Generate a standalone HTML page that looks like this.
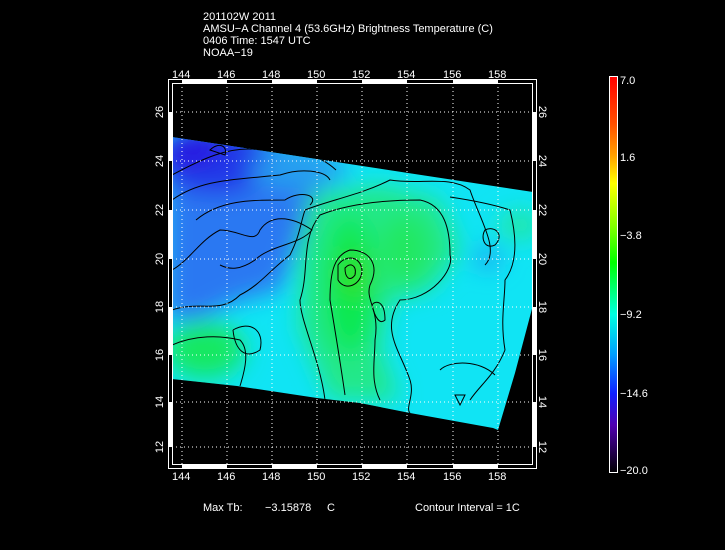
<!DOCTYPE html>
<html><head><meta charset="utf-8"><style>
html,body{margin:0;padding:0;background:#000;}
body{width:725px;height:550px;overflow:hidden;position:relative;font-family:"Liberation Sans",sans-serif;color:#fff;}
.t{position:absolute;font-size:11px;line-height:12px;white-space:nowrap;color:#fff;}
</style></head><body>
<div class="t" style="left:203px;top:11px;">201102W 2011<br>AMSU−A Channel 4 (53.6GHz) Brightness Temperature (C)<br>0406 Time: 1547 UTC<br>NOAA−19</div>
<svg width="725" height="550" style="position:absolute;left:0;top:0" xmlns="http://www.w3.org/2000/svg">
<defs>
<clipPath id="c"><path d="M172,137 L533,192 L533,305 L515,373 L498,430 L493,428 L410,413 L360,403 L317,398 L237,386 L200,382 L172,379 Z"/></clipPath>
<filter id="b" x="-50%" y="-50%" width="200%" height="200%"><feGaussianBlur stdDeviation="12"/></filter>
<linearGradient id="cb" x1="0" y1="0" x2="0" y2="1">
<stop offset="0" stop-color="#ff0000"/><stop offset="0.12" stop-color="#ff5000"/><stop offset="0.2" stop-color="#ffa000"/><stop offset="0.27" stop-color="#ffff00"/><stop offset="0.38" stop-color="#80ff00"/><stop offset="0.47" stop-color="#00ff00"/><stop offset="0.6" stop-color="#00ffe0"/><stop offset="0.7" stop-color="#00a0ff"/><stop offset="0.8" stop-color="#1020ff"/><stop offset="0.88" stop-color="#5000b0"/><stop offset="1" stop-color="#000000"/>
</linearGradient>
</defs>
<g clip-path="url(#c)">
<rect x="160" y="120" width="390" height="320" fill="#10e4f4"/>
<g filter="url(#b)">
<path d="M165,130 L330,150 L320,200 L300,240 L280,290 L240,300 L200,320 L165,320 Z" fill="#2a78f2"/>
<ellipse cx="215" cy="160" rx="60" ry="35" fill="#2238e8"/>
<ellipse cx="190" cy="150" rx="30" ry="15" fill="#2a10e0"/>
<ellipse cx="300" cy="170" rx="50" ry="18" fill="#28a0f0"/>
<path d="M310,195 L380,185 L440,200 L460,250 L430,290 L390,300 L380,350 L400,400 L330,400 L300,330 L300,250 Z" fill="#20e888"/>
<ellipse cx="350" cy="285" rx="25" ry="70" fill="#10e850"/>
<ellipse cx="355" cy="275" rx="18" ry="22" fill="#30e020"/>
<ellipse cx="405" cy="250" rx="25" ry="35" fill="#20e860"/>
<ellipse cx="205" cy="350" rx="40" ry="28" fill="#18e860"/>
<ellipse cx="520" cy="225" rx="22" ry="14" fill="#20e8a0"/>
<ellipse cx="488" cy="258" rx="14" ry="10" fill="#20a0f0"/>
</g>
<g fill="none" stroke="#000" stroke-width="1">
<path d="M172,175 C200,160 230,145 260,150 C290,145 320,155 336,170"/>
<path d="M172,200 C200,180 230,180 280,175 C300,168 325,170 330,180"/>
<path d="M196,220 C220,200 250,200 285,200 C300,190 320,195 310,205"/>
<path d="M172,270 C190,260 200,240 220,230 C240,230 255,245 260,230 C270,215 290,215 312,230 C300,245 270,245 255,260 C240,270 230,270 220,265"/>
<path d="M172,310 C200,300 220,315 240,295 C260,285 270,270 290,255 C300,235 300,225 305,210 C330,200 360,195 390,180 C420,185 450,175 470,190 C480,220 500,250 485,265"/>
<path d="M325,400 C320,360 300,320 300,300 C310,270 300,240 320,215 C345,205 380,200 420,200 C445,205 450,230 450,255 C455,270 430,300 400,300 C380,330 400,350 410,380 C415,395 405,408 410,413"/>
<path d="M345,395 C340,360 335,330 330,300 C330,270 335,255 350,250 C370,250 380,265 370,285 C365,300 380,310 375,340 C375,360 370,380 380,400"/>
<path d="M338,265 C345,255 360,255 362,270 C362,285 345,292 338,280 Z"/>
<path d="M345,268 C350,262 357,265 355,275 C350,282 345,278 345,268 Z"/>
<path d="M372,305 C375,300 385,300 385,320 C380,325 375,318 372,305 Z"/>
<path d="M233,330 C250,320 265,330 260,350 C245,360 235,350 233,330"/>
<path d="M172,345 C195,335 220,335 240,340 C250,350 245,370 240,386"/>
<path d="M450,197 C470,200 495,205 510,210 C515,230 520,260 505,280 C505,300 500,320 505,350 C495,375 480,385 470,400"/>
<path d="M485,230 C495,225 505,235 495,245 C485,250 480,238 485,230 Z"/>
<path d="M210,150 C218,142 228,145 225,155 Z"/>
<path d="M440,370 C450,360 480,360 495,375"/>
<path d="M455,395 L460,405 L465,395 Z"/>
</g>
</g>
<g fill="#fff" font-family="Liberation Sans" font-size="11">
<text x="172" y="78">144</text><text x="217" y="78">146</text><text x="262" y="78">148</text><text x="307" y="78">150</text><text x="352" y="78">152</text><text x="397" y="78">154</text><text x="443" y="78">156</text><text x="488" y="78">158</text>
<text x="172" y="480">144</text><text x="217" y="480">146</text><text x="262" y="480">148</text><text x="307" y="480">150</text><text x="352" y="480">152</text><text x="397" y="480">154</text><text x="443" y="480">156</text><text x="488" y="480">158</text>
</g>
<g fill="#fff" font-family="Liberation Sans" font-size="11">
<g transform="translate(159,112) rotate(-90)"><text x="0" y="4" text-anchor="middle">26</text></g>
<g transform="translate(159,161) rotate(-90)"><text x="0" y="4" text-anchor="middle">24</text></g>
<g transform="translate(159,210) rotate(-90)"><text x="0" y="4" text-anchor="middle">22</text></g>
<g transform="translate(159,259) rotate(-90)"><text x="0" y="4" text-anchor="middle">20</text></g>
<g transform="translate(159,307) rotate(-90)"><text x="0" y="4" text-anchor="middle">18</text></g>
<g transform="translate(159,355) rotate(-90)"><text x="0" y="4" text-anchor="middle">16</text></g>
<g transform="translate(159,402) rotate(-90)"><text x="0" y="4" text-anchor="middle">14</text></g>
<g transform="translate(159,447) rotate(-90)"><text x="0" y="4" text-anchor="middle">12</text></g>
<g transform="translate(543,112) rotate(90)"><text x="0" y="4" text-anchor="middle">26</text></g>
<g transform="translate(543,161) rotate(90)"><text x="0" y="4" text-anchor="middle">24</text></g>
<g transform="translate(543,210) rotate(90)"><text x="0" y="4" text-anchor="middle">22</text></g>
<g transform="translate(543,259) rotate(90)"><text x="0" y="4" text-anchor="middle">20</text></g>
<g transform="translate(543,307) rotate(90)"><text x="0" y="4" text-anchor="middle">18</text></g>
<g transform="translate(543,355) rotate(90)"><text x="0" y="4" text-anchor="middle">16</text></g>
<g transform="translate(543,402) rotate(90)"><text x="0" y="4" text-anchor="middle">14</text></g>
<g transform="translate(543,447) rotate(90)"><text x="0" y="4" text-anchor="middle">12</text></g>
</g>
<g stroke="#fff" stroke-width="1" stroke-dasharray="1,3" fill="none">
<path d="M182,83V467M227,83V467M272,83V467M317,83V467M362,83V467M407,83V467M453,83V467M498,83V467"/>
<path d="M172,112H533M172,161H533M172,210H533M172,259H533M172,307H533M172,355H533M172,402H533M172,447H533"/>
</g>
<g fill="#fff">
<rect x="182" y="79" width="45" height="4"/><rect x="272" y="79" width="45" height="4"/><rect x="362" y="79" width="45" height="4"/><rect x="453" y="79" width="45" height="4"/>
<rect x="182" y="465" width="45" height="4"/><rect x="272" y="465" width="45" height="4"/><rect x="362" y="465" width="45" height="4"/><rect x="453" y="465" width="45" height="4"/>
<rect x="168" y="112" width="4" height="49"/><rect x="168" y="210" width="4" height="49"/><rect x="168" y="307" width="4" height="48"/><rect x="168" y="402" width="4" height="45"/>
<rect x="533" y="112" width="4" height="49"/><rect x="533" y="210" width="4" height="49"/><rect x="533" y="307" width="4" height="48"/><rect x="533" y="402" width="4" height="45"/>
</g>
<rect x="168.5" y="79.5" width="368" height="389" fill="none" stroke="#fff"/>
<rect x="172.5" y="83.5" width="360" height="381" fill="none" stroke="#fff"/>
<rect x="609" y="76" width="8" height="397" fill="url(#cb)"/>
<rect x="609.5" y="76.5" width="8" height="396" fill="none" stroke="#fff"/>
<g fill="#fff" font-family="Liberation Sans" font-size="11">
<text x="620" y="84">7.0</text><text x="620" y="161">1.6</text><text x="620" y="239">−3.8</text><text x="620" y="318">−9.2</text><text x="620" y="397">−14.6</text><text x="620" y="474">−20.0</text>
<text x="203" y="511">Max Tb:</text><text x="265" y="511">−3.15878</text><text x="327" y="511">C</text><text x="415" y="511">Contour Interval = 1C</text>
</g>
</svg>
</body></html>
